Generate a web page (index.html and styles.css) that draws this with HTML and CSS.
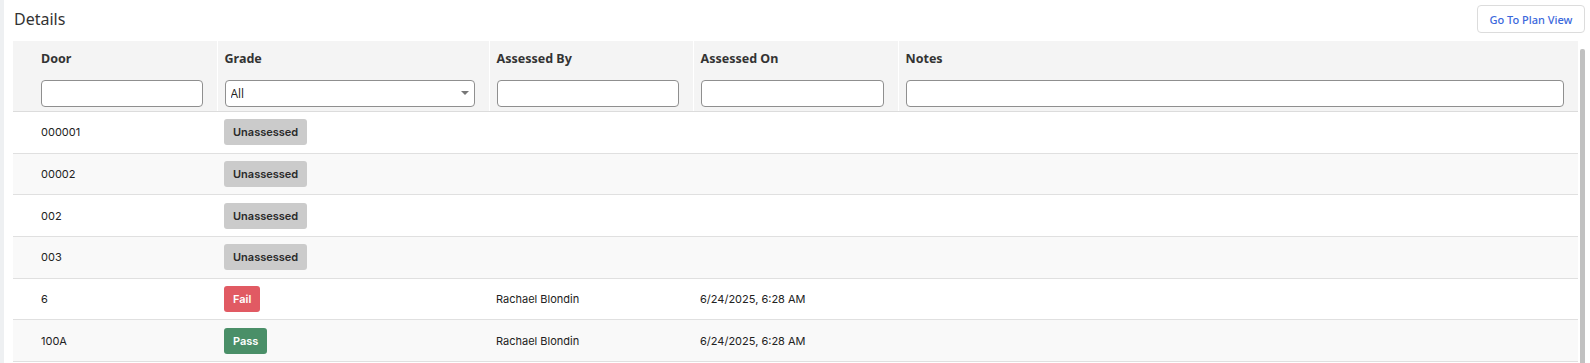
FILE: index.html
```html
<!DOCTYPE html>
<html lang="en">
	<head>
		<meta charset="UTF-8">
		<title>Details</title>
		<link rel="stylesheet" href="styles.css">
	</head>
	<body>
		<div class="rail"></div>
		<main>
			<div class="top">
				<h2>Details</h2>
				<button type="button" class="plan-btn">Go To Plan View</button>
			</div>
			<div class="grid-wrap">
				<div class="grid-box">
					<table class="grid">
						<colgroup>
							<col class="c-door">
							<col class="c-grade">
							<col class="c-by">
							<col class="c-on">
							<col>
						</colgroup>
						<thead>
							<tr>
								<th><div class="th-label">Door</div><input type="text"></th>
								<th><div class="th-label">Grade</div>
									<div class="select-wrap"><select><option>All</option></select></div>
								</th>
								<th><div class="th-label">Assessed By</div><input type="text"></th>
								<th><div class="th-label">Assessed On</div><input type="text"></th>
								<th><div class="th-label">Notes</div><input type="text"></th>
							</tr>
						</thead>
						<tbody>
							<tr>
								<td>000001</td>
								<td><span class="badge none">Unassessed</span></td>
								<td></td><td></td><td></td>
							</tr>
							<tr>
								<td>00002</td>
								<td><span class="badge none">Unassessed</span></td>
								<td></td><td></td><td></td>
							</tr>
							<tr>
								<td>002</td>
								<td><span class="badge none">Unassessed</span></td>
								<td></td><td></td><td></td>
							</tr>
							<tr>
								<td>003</td>
								<td><span class="badge none">Unassessed</span></td>
								<td></td><td></td><td></td>
							</tr>
							<tr>
								<td>6</td>
								<td><span class="badge fail">Fail</span></td>
								<td>Rachael Blondin</td>
								<td>6/24/2025, 6:28 AM</td>
								<td></td>
							</tr>
							<tr>
								<td>100A</td>
								<td><span class="badge pass">Pass</span></td>
								<td>Rachael Blondin</td>
								<td>6/24/2025, 6:28 AM</td>
								<td></td>
							</tr>
						</tbody>
					</table>
				</div>
				<div class="scroll-thumb"></div>
			</div>
		</main>
	</body>
</html>
```

FILE: styles.css
```css
html, body{
	margin: 0;
	height: 100%;
	overflow: hidden;
}
body{
	display: flex;
	background: #fff;
	font-family: "Noto Sans", "Open Sans", sans-serif;
	color: #222;
}
.rail{
	width: 4px;
	flex: none;
	background: #eef0f2;
}
main{
	flex: 1;
	padding: 0 5px 0 9px;
	display: flex;
	flex-direction: column;
}
.top{
	height: 41px;
	display: flex;
	justify-content: space-between;
	align-items: flex-start;
}
.top h2{
	margin: 9px 0 0 1px;
	font-size: 16px;
	line-height: 20px;
	font-weight: 400;
	color: #333;
}
.plan-btn{
	margin-top: 5px;
	height: 28px;
	width: 108px;
	padding: 0;
	border: 1px solid #dcdcdc;
	border-radius: 4px;
	background: #fff;
	color: #3b68dc;
	font-family: "Noto Sans", sans-serif;
	font-size: 11px;
	font-weight: 500;
	cursor: pointer;
}
.grid-wrap{
	display: flex;
	flex: 1;
}
.grid-box{
	flex: 1;
}
.scroll-thumb{
	width: 5px;
	margin: 8px 0 0 2px;
	background: #c1c1c1;
	border-radius: 2px 2px 0 0;
}
.grid{
	width: 100%;
	table-layout: fixed;
	border-collapse: collapse;
}
.c-door{ width: 204px; }
.c-grade{ width: 272px; }
.c-by{ width: 204px; }
.c-on{ width: 205px; }
.grid th{
	background: #f4f4f4;
	text-align: left;
	vertical-align: top;
	padding: 10px 14px 4px 7px;
	border-left: 1px solid #fff;
	border-bottom: 1px solid #dcdcdc;
}
.grid th:first-child, .grid td:first-child{
	padding-left: 28px;
	border-left: none;
}
.th-label{
	font-size: 12.5px;
	font-weight: 700;
	line-height: 16px;
	color: #333;
	margin-bottom: 13px;
}
.grid input, .grid select{
	display: block;
	box-sizing: border-box;
	width: 100%;
	height: 27px;
	margin: 0;
	border: 1px solid #8f8f8f;
	border-radius: 4px;
	background: #fff;
}
.select-wrap{
	position: relative;
}
.grid select{
	appearance: none;
	padding: 0 5px;
	font-family: "Open Sans", sans-serif;
	font-size: 12px;
	color: #222;
}
.select-wrap::after{
	content: "";
	position: absolute;
	right: 6px;
	top: 11px;
	border-left: 4px solid transparent;
	border-right: 4px solid transparent;
	border-top: 4px solid #777;
}
.grid td{
	height: 40.7px;
	padding: 0 14px 0 7px;
	font-family: Inter, "Noto Sans", sans-serif;
	font-size: 11px;
	color: #222;
	border-bottom: 1px solid #e0e0e0;
	white-space: nowrap;
}
.grid tbody tr:nth-child(even){
	background: #f9f9f9;
}
.badge{
	display: inline-block;
	height: 26px;
	line-height: 26px;
	padding: 0 9px;
	border-radius: 3px;
	font-size: 11px;
	font-weight: 600;
}
.badge.none{
	background: #cbcbcb;
	color: #2a2a2a;
}
.badge.fail{
	background: #e15a63;
	color: #fff;
}
.badge.pass{
	background: #4a8f68;
	color: #fff;
}
```
